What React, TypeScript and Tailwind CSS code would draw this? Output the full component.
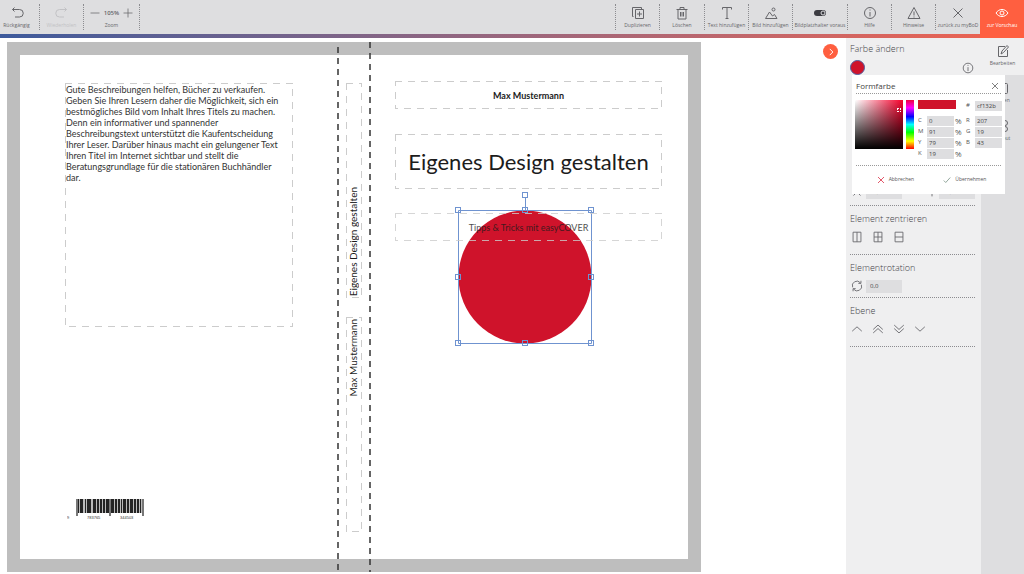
import React, { useState } from 'react'

type IconProps = { className?: string; children: React.ReactNode }

function Icon({ className = 'w-4 h-4', children }: IconProps) {
  return (
    <svg
      viewBox="0 0 16 16"
      className={className}
      fill="none"
      stroke="currentColor"
      strokeWidth="1"
      aria-hidden="true"
    >
      {children}
    </svg>
  )
}

const icons = {
  undo: <path d="M3.5 4.5h7a3.3 3.3 0 0 1 0 7.5H6M5.5 2.5 3.5 4.5l2 2" />,
  redo: <path d="M12.5 4.5h-7a3.3 3.3 0 0 0 0 7.5H10M10.5 2.5l2 2-2 2" />,
  duplicate: <path d="M5.5 4.5h8v9h-8zM3.5 11.5h-1v-9h9v1.5M9.5 6.5v5M7 9h5" />,
  trash: <path d="M2.5 4.5h11M6 4V2.5h4V4M4 4.5V14h8V4.5M6.5 7v4.5M8 7v4.5M9.5 7v4.5" />,
  text: <path d="M3.5 4.5v-2h9v2M8 2.5v11M6.5 13.5h3" />,
  image: (
    <>
      <path d="M2.5 13.5 6.5 7l3 4 2-1.5 2.5 4z" />
      <circle cx="10.5" cy="4.5" r="1.5" />
    </>
  ),
  info: (
    <>
      <circle cx="8" cy="8" r="5.5" />
      <path d="M8 7v4.5M8 4.5v1" />
    </>
  ),
  warning: <path d="M8 2.5 14 13.5H2zM8 6.5v4M8 11.5v1" />,
  close: <path d="m3.5 3.5 9 9M12.5 3.5l-9 9" />,
  eye: (
    <>
      <path d="M2 8c3-4.7 9-4.7 12 0-3 4.7-9 4.7-12 0z" />
      <circle cx="8" cy="8" r="2" />
    </>
  ),
  edit: <path d="M10 3.5H3.5v10h9V7M6 11l1-3 5-5.5 1.5 1.5-5 5.5z" />,
  check: <path d="m1.5 9 4 4 9-10" strokeWidth="1.5" />,
  cross: <path d="m2 2 12 12M14 2 2 14" strokeWidth="1.5" />,
  page: <rect x="3.5" y="3.5" width="9" height="10" rx="1" />,
  people: (
    <>
      <circle cx="5" cy="5" r="2.5" />
      <circle cx="10" cy="5" r="2.5" />
      <circle cx="5" cy="11" r="2.5" />
      <circle cx="10" cy="11" r="2.5" />
    </>
  ),
  rotate: (
    <path d="M3 9.5A5.2 5.2 0 0 1 12 4.5M13 6.5A5.2 5.2 0 0 1 4 11.5M12.5 2v3h-3M3.5 14v-3h3" />
  ),
}

type ToolProps = {
  icon: React.ReactNode
  label: string
  className?: string
}

function Tool({ icon, label, className = 'w-11' }: ToolProps) {
  return (
    <button
      type="button"
      className={`flex h-full shrink-0 flex-col items-center gap-px pt-[5px] ${className}`}
    >
      {icon}
      <span className="whitespace-nowrap text-[5px] leading-[6px]">{label}</span>
    </button>
  )
}

function Divider() {
  return <span className="my-1 w-0 shrink-0 border-l border-dotted border-[#8c8c90]" />
}

function Toolbar() {
  const tools = [
    { label: 'Duplizieren', icon: <Icon>{icons.duplicate}</Icon>, width: 'w-[43px]' },
    { label: 'Löschen', icon: <Icon>{icons.trash}</Icon>, width: 'w-[44px]' },
    { label: 'Text hinzufügen', icon: <Icon>{icons.text}</Icon>, width: 'w-[43px]' },
    { label: 'Bild hinzufügen', icon: <Icon>{icons.image}</Icon>, width: 'w-[43px]' },
    {
      label: 'Bildplatzhalter voraus',
      icon: (
        <svg viewBox="0 0 16 16" className="w-4 h-4" aria-hidden="true">
          <rect x="2" y="5" width="12" height="6" rx="3" fill="#3c3c42" />
          <circle cx="11" cy="8" r="2" fill="#3c3c42" stroke="#dedee0" />
        </svg>
      ),
      width: 'w-[54px]',
    },
    { label: 'Hilfe', icon: <Icon>{icons.info}</Icon>, width: 'w-[43px]' },
    { label: 'Hinweise', icon: <Icon>{icons.warning}</Icon>, width: 'w-[43px]' },
    { label: 'zurück zu myBoD', icon: <Icon>{icons.close}</Icon>, width: 'w-[44px]' },
  ]

  return (
    <header className="relative h-[38px] bg-[#dedee0] text-[#66666a]">
      <div className="absolute inset-x-0 bottom-0 h-1 bg-linear-to-r from-[#3d5a9c] to-[#f0604c]" />
      <div className="relative flex h-full">
        <div className="flex h-[34px]">
          <Tool className="w-[39px] pr-1.5" label="Rückgängig" icon={<Icon>{icons.undo}</Icon>} />
          <Divider />
          <Tool
            className="w-[43px] text-[#c2c2c5]"
            label="Wiederholen"
            icon={<Icon>{icons.redo}</Icon>}
          />
          <Divider />
          <div className="flex w-[55px] flex-col items-center gap-px pt-[5px]">
            <div className="flex h-4 items-center gap-[3px]">
              <button type="button" aria-label="Verkleinern">
                <Icon className="w-3 h-3">
                  <path d="M2 8h12" />
                </Icon>
              </button>
              <span className="text-[6px] leading-[8px] font-semibold">105%</span>
              <button type="button" aria-label="Vergrößern">
                <Icon className="w-3 h-3">
                  <path d="M2 8h12M8 2v12" />
                </Icon>
              </button>
            </div>
            <span className="text-[5px] leading-[6px]">Zoom</span>
          </div>
          <Divider />
        </div>
        <div className="ml-auto flex h-[34px]">
          {tools.map((tool) => (
            <React.Fragment key={tool.label}>
              <Divider />
              <Tool label={tool.label} icon={tool.icon} className={tool.width} />
            </React.Fragment>
          ))}
        </div>
        <Tool
          className="w-[44px] bg-[#ff5f40] text-white"
          label="zur Vorschau"
          icon={<Icon>{icons.eye}</Icon>}
        />
      </div>
    </header>
  )
}

/* Dashed outline of an editable text area on the cover */
function DashedFrame() {
  return (
    <svg className="absolute inset-0 h-full w-full" aria-hidden="true">
      <rect
        width="100%"
        height="100%"
        fill="none"
        stroke="#cccccc"
        strokeWidth="2"
        strokeDasharray="7 6"
      />
    </svg>
  )
}

const bars = [
  [0, 3], [4, 3], [9, 1], [11, 3], [14, 1], [17, 3], [21, 2], [24, 2], [27, 2], [30, 4],
  [35, 3], [39, 2], [42, 2], [45, 1], [47, 3], [51, 2], [54, 3], [58, 2], [61, 2], [64, 1],
  [66, 1],
]

function Barcode() {
  return (
    <svg viewBox="0 0 80 22" className="absolute left-[47px] top-[443px] h-[22px] w-20">
      <rect x="9" y="1" width="68" height="14" fill="#bbb" />
      {bars.map(([x, width]) => (
        <rect key={x} x={x + 9} y="1" width={width} height="14" fill="#242424" />
      ))}
      <path d="M10 1v17M43 1v17M76 1v17" stroke="#777" strokeWidth="2" />
      <g fontSize="4" fill="#333" fontFamily="Liberation Sans, sans-serif">
        <text x="0" y="21">9</text>
        <text x="20" y="21">783765</text>
        <text x="53" y="21">344503</text>
      </g>
    </svg>
  )
}

const handles = [
  [4, 19], [71, 19], [137, 19], [4, 86], [137, 86], [4, 152], [71, 152], [137, 152], [71, 4],
]

function SelectedCircle() {
  return (
    <svg viewBox="0 0 141 156" className="absolute left-[434px] top-[136px] h-[156px] w-[141px]">
      <circle cx="71" cy="86" r="66.5" fill="#cf132b" />
      <g fill="none" stroke="#6f93d0">
        <path d="M4.5 19.5h133v133h-133zM71.5 19.5V6" />
        {handles.map(([x, y]) => (
          <rect key={`${x}-${y}`} x={x - 2.5} y={y - 2.5} width="5" height="5" />
        ))}
      </g>
    </svg>
  )
}

function Cover() {
  return (
    <div className="relative mt-1 ml-[7px] h-[530px] w-[694px] shrink-0 border-[13px] border-[#bebebe] bg-white font-['Lato',sans-serif] text-[#1c1c1c] [font-variant-ligatures:none]">
      {/* back cover */}
      <div className="absolute left-[45px] top-7 h-[244px] w-[228px]">
        <DashedFrame />
        <p className="relative pt-px pl-px text-[9px] leading-[11px] whitespace-nowrap text-[#333]">
          Gute Beschreibungen helfen, Bücher zu verkaufen.
          <br />
          Geben Sie Ihren Lesern daher die Möglichkeit, sich ein
          <br />
          bestmögliches Bild vom Inhalt Ihres Titels zu machen.
          <br />
          Denn ein informativer und spannender
          <br />
          Beschreibungstext unterstützt die Kaufentscheidung
          <br />
          Ihrer Leser. Darüber hinaus macht ein gelungener Text
          <br />
          Ihren Titel im Internet sichtbar und stellt die
          <br />
          Beratungsgrundlage für die stationären Buchhändler
          <br />
          dar.
        </p>
      </div>
      <Barcode />

      {/* spine */}
      <svg
        viewBox="0 0 34 530"
        className="absolute left-[317px] -top-[13px] h-[530px] w-[34px]"
        aria-hidden="true"
      >
        <path d="M1 5v525M33 0v530" stroke="#333" strokeWidth="1.5" strokeDasharray="6 5" />
      </svg>
      <div className="absolute left-[326px] top-7 h-[215px] w-4">
        <DashedFrame />
        <span className="absolute bottom-0.5 left-0 rotate-180 whitespace-nowrap text-[10px] leading-[14px] [writing-mode:vertical-rl]">
          Eigenes Design gestalten
        </span>
      </div>
      <div className="absolute left-[326px] top-[262px] h-[215px] w-4">
        <DashedFrame />
        <span className="absolute top-0.5 left-0 rotate-180 whitespace-nowrap text-[10px] leading-[14px] [writing-mode:vertical-rl]">
          Max Mustermann
        </span>
      </div>

      {/* front cover */}
      <SelectedCircle />
      <div className="absolute left-[375px] top-[26px] flex h-7 w-[267px] items-center justify-center">
        <DashedFrame />
        <p className="pt-0.5 text-[9px] font-bold">Max Mustermann</p>
      </div>
      <div className="absolute left-[375px] top-[79px] flex h-[55px] w-[267px] items-center justify-center">
        <DashedFrame />
        <h1 className="text-[22px] whitespace-nowrap">Eigenes Design gestalten</h1>
      </div>
      <div className="absolute left-[375px] top-[158px] flex h-7 w-[267px] items-center justify-center opacity-80">
        <DashedFrame />
        <p className="pt-0.5 text-[9px]">Tipps &amp; Tricks mit easyCOVER</p>
      </div>
    </div>
  )
}

type FieldProps = {
  id: string
  label: string
  value: string
  unit?: string
}

function Field({ id, label, value, unit }: FieldProps) {
  return (
    <div className="flex h-[11px] items-center">
      <label htmlFor={id} className="w-[9px] shrink-0 text-[6px]">
        {label}
      </label>
      <input
        id={id}
        defaultValue={value}
        className="h-[10px] w-[27px] bg-[#dedee0] px-0.5 text-[6px] text-[#444]"
      />
      {unit && <span className="pl-px text-[8px]">{unit}</span>}
    </div>
  )
}

function ColorDialog({ onClose }: { onClose: () => void }) {
  return (
    <div
      role="dialog"
      aria-label="Formfarbe"
      className="absolute left-1.5 top-[37px] z-10 h-[119px] w-[153px] bg-white text-[#555]"
    >
      <div className="mx-1 flex h-[19px] items-center justify-between border-b border-dotted border-[#999] pt-1 pr-0.5">
        <h2 className="text-[8px] leading-[12px] text-[#444]">Formfarbe</h2>
        <button type="button" aria-label="Schließen" onClick={onClose}>
          <Icon className="w-2 h-2">{icons.cross}</Icon>
        </button>
      </div>
      <div className="flex h-[71px] pt-1.5 pl-[3px]">
        <div className="relative h-[49px] w-12 bg-[linear-gradient(to_top,#000,transparent),linear-gradient(to_right,#fff,#f5002b)]">
          <span className="absolute top-2 right-0.5 h-1 w-1 border border-dotted border-white" />
        </div>
        <div className="ml-[3px] h-[49px] w-2 bg-[linear-gradient(to_bottom,#f0003c,#f0f_16%,#00f_34%,#0ff_50%,#0f0_66%,#ff0_84%,#f00)]" />
        <div className="ml-1 w-[48px]">
          <div className="mb-1.5 h-[9px] w-[38px] bg-[#cf132b]" />
          <Field id="c" label="C" value="0" unit="%" />
          <Field id="m" label="M" value="91" unit="%" />
          <Field id="y" label="Y" value="79" unit="%" />
          <Field id="k" label="K" value="19" unit="%" />
        </div>
        <div>
          <div className="mb-1">
            <Field id="hex" label="#" value="cf132b" />
          </div>
          <Field id="r" label="R" value="207" />
          <Field id="g" label="G" value="19" />
          <Field id="b" label="B" value="43" />
        </div>
      </div>
      <div className="mx-1 flex h-[29px] items-center justify-around border-t border-dotted border-[#999] pl-1.5">
        <button type="button" className="flex items-center gap-1 text-[5px]">
          <Icon className="w-2 h-2 text-[#d8213a]">{icons.cross}</Icon>
          Abbrechen
        </button>
        <button type="button" className="flex items-center gap-1 text-[5px]">
          <Icon className="w-2 h-2 text-[#6f8a7c]">{icons.check}</Icon>
          Übernehmen
        </button>
      </div>
    </div>
  )
}

type SectionProps = { title: string; className: string; children: React.ReactNode }

function Section({ title, className, children }: SectionProps) {
  return (
    <section className={`border-t border-dotted border-[#8c8c90] ${className}`}>
      <h2 className="pt-1.5 text-[9px] leading-[14px] font-light text-[#444448]">{title}</h2>
      {children}
    </section>
  )
}

const centerActions = [
  { label: 'Horizontal zentrieren', d: 'M3.5 2.5v11h9v-11zM8 2.5v11' },
  { label: 'Beides zentrieren', d: 'M3.5 2.5v11h9v-11zM8 2.5v11M3.5 8h9' },
  { label: 'Vertikal zentrieren', d: 'M3.5 2.5v11h9v-11zM3.5 8h9' },
]

const layerActions = [
  { label: 'Eine Ebene vor', d: 'm2.5 10.5 5.5-5 5.5 5' },
  { label: 'Ganz nach vorne', d: 'm2.5 8.5 5.5-5 5.5 5M2.5 12.5l5.5-5 5.5 5' },
  { label: 'Ganz nach hinten', d: 'm2.5 3.5 5.5 5 5.5-5M2.5 7.5l5.5 5 5.5-5' },
  { label: 'Eine Ebene zurück', d: 'm2.5 5.5 5.5 5 5.5-5' },
]

function IconRow({ actions }: { actions: { label: string; d: string }[] }) {
  return (
    <div className="flex gap-[7px] pt-1">
      {actions.map(({ label, d }) => (
        <button key={label} type="button" aria-label={label}>
          <Icon className="w-3.5 h-3.5">
            <path d={d} />
          </Icon>
        </button>
      ))}
    </div>
  )
}

type ValueInputProps = { label: string; value: string }

function ValueInput({ label, value }: ValueInputProps) {
  return (
    <input
      aria-label={label}
      defaultValue={value}
      className="h-[13px] w-9 bg-[#dedee0] px-1 text-[6px] text-[#444]"
    />
  )
}

function Sidebar() {
  const [open, setOpen] = useState(true)

  return (
    <aside className="relative flex w-[178px] shrink-0 bg-[#efeff0] text-[#66666a]">
      <div className="w-[135px] pr-1.5 pl-1">
        <h2 className="pt-1 text-[9px] leading-[14px] font-light text-[#444448]">Farbe ändern</h2>
        <div className="flex h-[19px] items-center justify-between pt-1">
          <button
            type="button"
            aria-label="Formfarbe wählen"
            onClick={() => setOpen(true)}
            className="h-[15px] w-[15px] rounded-full border border-[#4f5ea0] bg-[#cf132b]"
          />
          <Icon className="w-3.5 h-3.5">{icons.info}</Icon>
        </div>
        <div className="flex h-[130px] items-end justify-between pb-1.5">
          <div className="flex items-center gap-0.5">
            <Icon className="w-3.5 h-3.5">
              <path d="m4 4 8 8M12 4l-8 8" />
            </Icon>
            <ValueInput label="X" value="79,787" />
          </div>
          <div className="flex items-center">
            <Icon className="w-3.5 h-3.5">
              <path d="m5 3 3 5 3-5M8 8v5" />
            </Icon>
            <ValueInput label="Y" value="60,0000" />
          </div>
        </div>
        <Section title="Element zentrieren" className="h-[49px]">
          <IconRow actions={centerActions} />
        </Section>
        <Section title="Elementrotation" className="h-[43px]">
          <div className="flex items-center gap-0.5 pt-1">
            <Icon className="w-3.5 h-3.5">{icons.rotate}</Icon>
            <ValueInput label="Elementrotation" value="0,0" />
          </div>
        </Section>
        <Section title="Ebene" className="h-[50px] border-b">
          <IconRow actions={layerActions} />
        </Section>
      </div>
      <div className="flex-1 bg-[#dedee0]">
        <div className="h-[37px] bg-[#efeff0]">
          <Tool className="w-full" label="Bearbeiten" icon={<Icon>{icons.edit}</Icon>} />
        </div>
        <div className="h-[38px]">
          <Tool className="w-full" label="Seiten" icon={<Icon>{icons.page}</Icon>} />
        </div>
        <div className="h-[38px]">
          <Tool className="w-full" label="Layout" icon={<Icon>{icons.people}</Icon>} />
        </div>
      </div>
      {open && <ColorDialog onClose={() => setOpen(false)} />}
    </aside>
  )
}

export default function App() {
  return (
    <div className="flex min-h-screen flex-col bg-white font-['Open_Sans',sans-serif]">
      <Toolbar />
      <main className="flex flex-1">
        <Cover />
        <div className="flex flex-1 justify-end pt-1.5 pr-2">
          <button
            type="button"
            aria-label="Seitenleiste einklappen"
            className="flex h-[15px] w-[15px] items-center justify-center rounded-full bg-[#ff5f40] text-white"
          >
            <Icon className="h-2.5 w-2.5">
              <path d="m6 3 5 5-5 5" strokeWidth="1.5" />
            </Icon>
          </button>
        </div>
        <Sidebar />
      </main>
    </div>
  )
}
